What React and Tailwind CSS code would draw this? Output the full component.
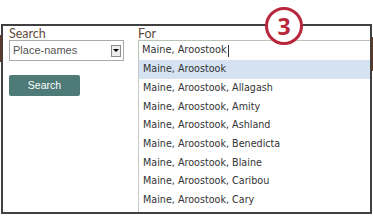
import React from 'react';

const places = [
  'Maine, Aroostook',
  'Maine, Aroostook, Allagash',
  'Maine, Aroostook, Amity',
  'Maine, Aroostook, Ashland',
  'Maine, Aroostook, Benedicta',
  'Maine, Aroostook, Blaine',
  'Maine, Aroostook, Caribou',
  'Maine, Aroostook, Cary',
];

export default function App() {
  return (
    <div className="relative w-[373px] h-[216px] bg-white overflow-hidden">
      {/* background bits peeking past the frame */}
      <div className="absolute left-0 top-[35px] w-[2px] h-[27px] bg-[#5a3a2c]" />
      <div className="absolute right-0 top-[37px] w-[2px] h-[34px] bg-[#5a3a2c]" />

      <div className="ml-[1px] mt-[24px] w-[371px] h-[190px] border-2 border-[#404040] flex pl-[6px] pt-[1px] overflow-hidden">
        {/* Left column */}
        <div className="w-[115px] shrink-0 flex flex-col">
          <label className="h-[13px] text-[12.5px] leading-[13px] text-[#5e4c3c] font-['Lato',sans-serif]">
            Search
          </label>
          <div className="h-[21px] border border-[#a9a9a9] flex items-center justify-between pl-[3px] pr-[2px] font-['Liberation_Sans',sans-serif] text-[11px] text-[#555]">
            <span>Place-names</span>
            <span className="w-[10px] h-[12px] border border-[#8a8a8a] bg-[#ececec] flex items-center justify-center">
              <span className="w-0 h-0 border-l-[3px] border-r-[3px] border-t-[3px] border-l-transparent border-r-transparent border-t-black" />
            </span>
          </div>
          <button className="mt-[14px] w-[71px] h-[21px] rounded-[2px] bg-[#4e7b78] text-white text-[10.5px] font-['Liberation_Sans',sans-serif]">
            Search
          </button>
        </div>

        {/* Right column */}
        <div className="ml-[14px] flex-1 flex flex-col">
          <label className="h-[13px] text-[12.5px] leading-[13px] text-[#5e4c3c] font-['Lato',sans-serif]">
            For
          </label>
          <div className="h-[20px] border-t border-l border-[#b9c4b6] flex items-center pl-[3px] font-['DejaVu_Sans',sans-serif] text-[9.8px] text-[#333]">
            Maine, Aroostook<span className="w-px h-[12px] bg-[#333] ml-px" />
          </div>
          <ul className="flex-1 border-l border-[#c8c8c8] font-['DejaVu_Sans',sans-serif] text-[9.6px] text-[#333]">
            {places.map((p, i) => (
              <li
                key={p}
                className={`h-[18.7px] flex items-center pl-[4px] ${i === 0 ? 'bg-[#d5e2f2]' : ''}`}
              >
                {p}
              </li>
            ))}
          </ul>
        </div>
      </div>

      {/* step marker */}
      <div className="absolute left-[265px] top-[7px] w-[38px] h-[38px] rounded-full border-[3px] border-[#b8273b] bg-white flex items-center justify-center text-[#b8273b] font-bold text-[23px] leading-none font-['Open_Sans',sans-serif]">
        3
      </div>
    </div>
  );
}
